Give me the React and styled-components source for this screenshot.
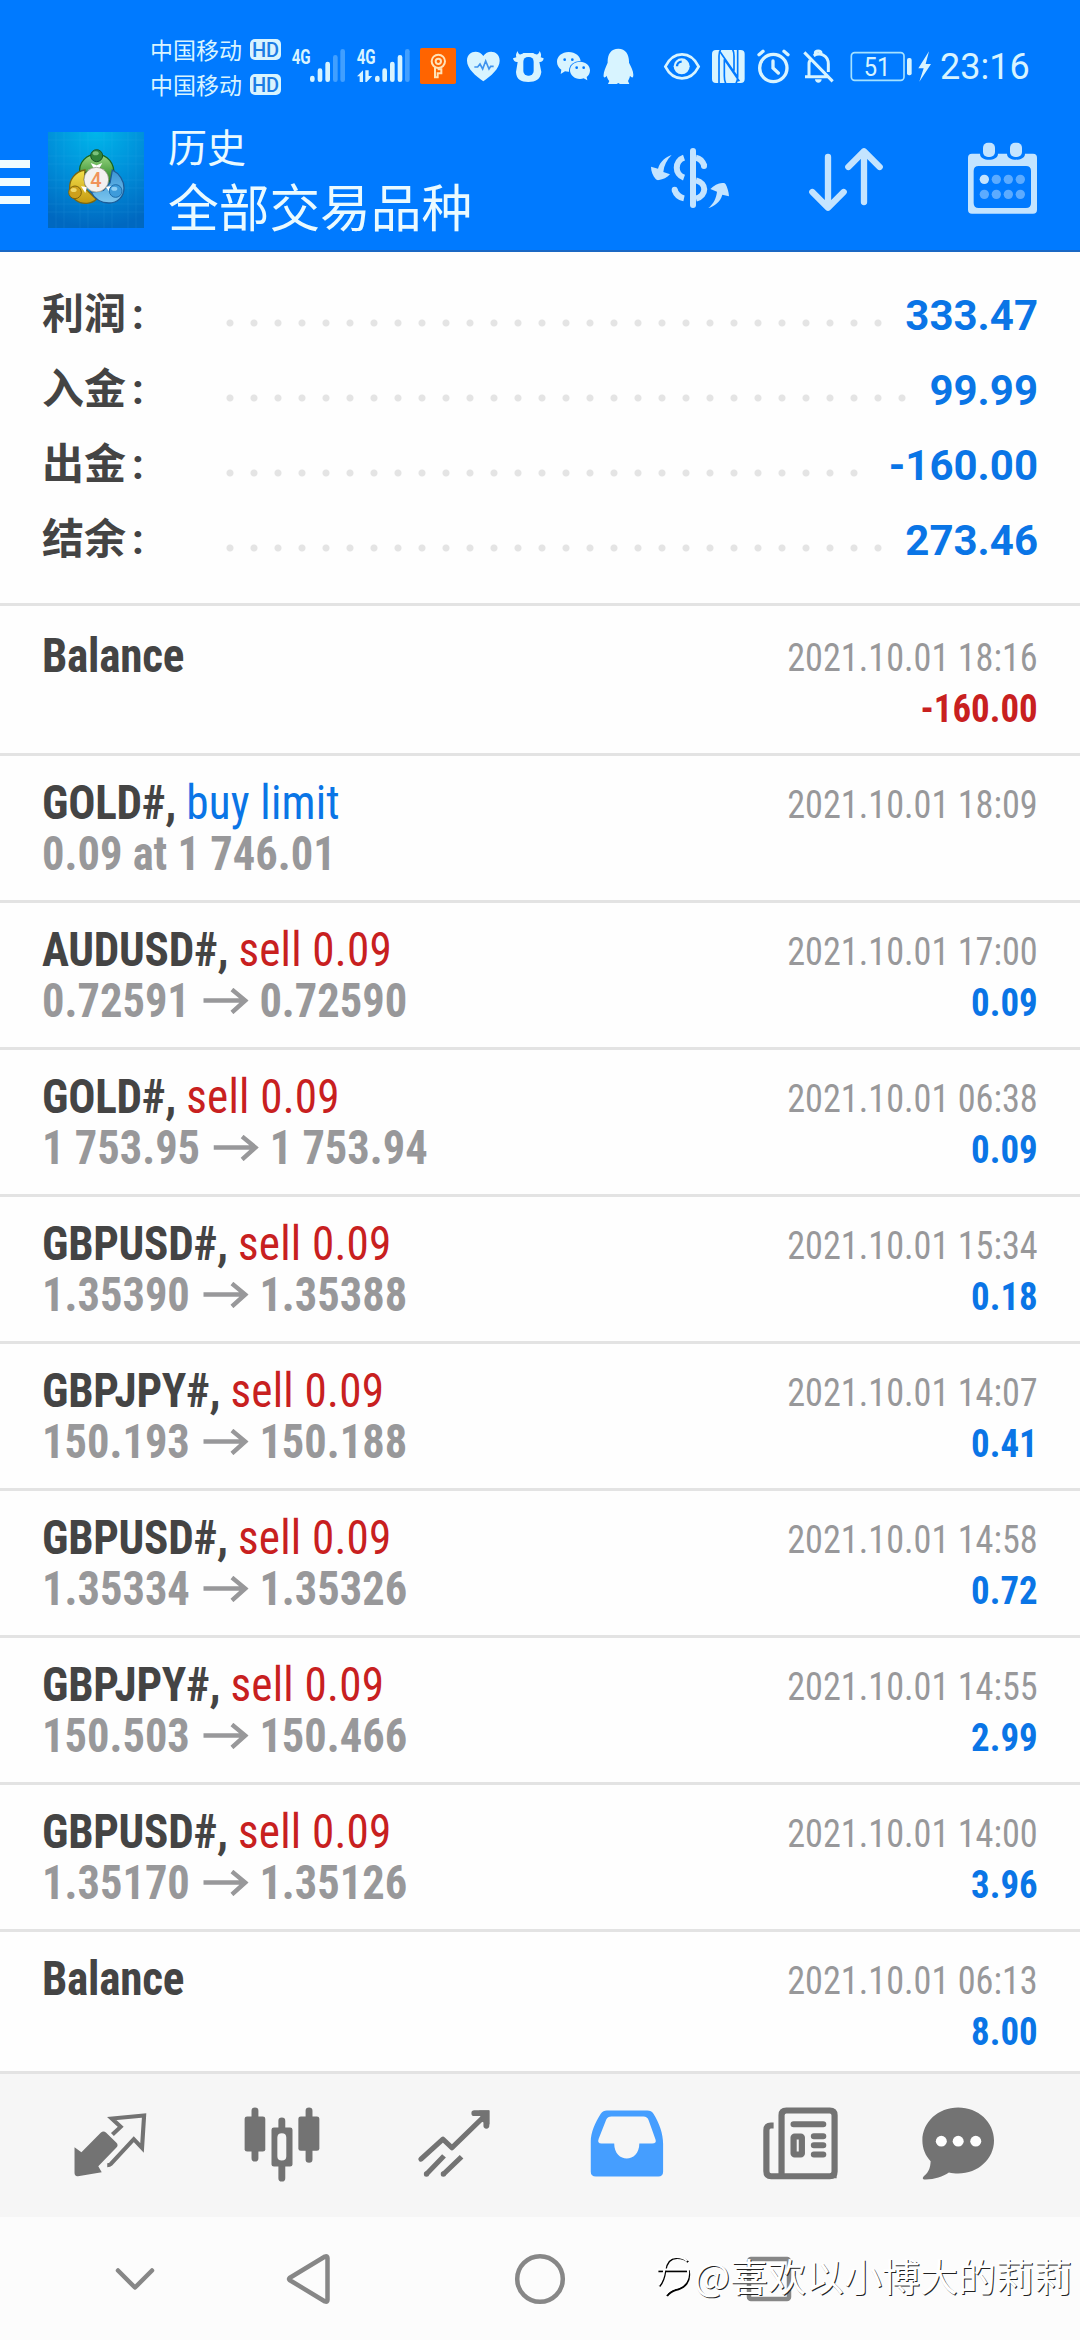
import React from "react";
import styled, { createGlobalStyle } from "styled-components";

const GlobalStyle = createGlobalStyle`
  * { box-sizing: border-box; }
  body {
    margin: 0;
    background: #ffffff;
    font-family: Roboto, "Noto Sans CJK SC", sans-serif;
  }
  svg { display: block; flex: none; }
`

const Screen = styled.div`
  position: relative;
  width: 1080px;
  height: 2340px;
  display: flex;
  flex-direction: column;
  overflow: hidden;
  background: #fefefe;
`

/* ---------- header ---------- */

const Header = styled.header`
  height: 252px;
  background: #007aff;
  border-bottom: 2px solid #1a68c4;
  color: #eafaff;
`

const StatusBar = styled.div`
  height: 112px;
  padding: 23px 0 0 150px;
  display: flex;
  align-items: center;
  color: #d8f4ff;
`

const Carriers = styled.div`
  width: 131px;
  display: flex;
  flex-direction: column;
  margin-bottom: 2px;
`

const Carrier = styled.div`
  height: 35px;
  display: flex;
  align-items: center;
  justify-content: space-between;
  font-size: 23px;
  line-height: 35px;
  font-family: "Noto Sans CJK SC", sans-serif;
  white-space: nowrap;
`

const HdBadge = styled.span`
  width: 31px;
  height: 21px;
  border-radius: 5px;
  background: #d8f4ff;
  color: #1c7ce4;
  font: 500 20px/22px Roboto, sans-serif;
  text-align: center;
`

const StatusSvg = styled.svg`
  height: 45px;
  margin-left: ${props => props.$gap}px;
`

const Clock = styled.span`
  margin-left: 8px;
  font-size: 36px;
  line-height: 45px;
`

const Toolbar = styled.div`
  height: 138px;
  display: flex;
`

const MenuButton = styled.div`
  width: 48px;
  padding-top: 48px;
  display: flex;
  flex-direction: column;
  gap: 10px;
`

const MenuLine = styled.span`
  width: 30px;
  height: 8px;
  background: #f0fcff;
`

const LogoBox = styled.div`
  padding-top: 20px;
`

const Titles = styled.div`
  flex: 1;
  padding: 5px 0 0 24px;
  font-family: "Noto Sans CJK SC", sans-serif;
  white-space: nowrap;
`

const SmallTitle = styled.div`
  font-size: 39px;
  line-height: 56px;
`

const BigTitle = styled.div`
  font-size: 50.7px;
  line-height: 65px;
`

const ToolIcon = styled.svg`
  width: 156px;
  height: 90px;
  margin-top: 18px;
`

/* ---------- summary ---------- */

const Summary = styled.section`
  height: 354px;
  padding: 26px 42px 0;
  border-bottom: 3px solid #e3e3e3;
`

const SummaryRow = styled.div`
  height: 75px;
  display: flex;
  align-items: center;
  font-size: 42px;
  font-weight: 700;
`

const SummaryLabel = styled.span`
  width: 176px;
  margin-bottom: 6px;
  color: #444444;
  line-height: 60px;
  font-family: "Noto Sans CJK SC", sans-serif;
`

const Colon = styled.span`
  margin-left: 6px;
  font-family: Roboto, sans-serif;
`

const Dots = styled.span`
  width: ${props => props.$count * 24}px;
  height: 8px;
  margin-top: 14px;
  background: radial-gradient(circle, #e4e4e4 3px, transparent 4px) 0 0 / 24px 8px;
`

const SummaryValue = styled.span`
  margin-left: auto;
  color: #0a75e6;
  line-height: 60px;
`

/* ---------- deals ---------- */

const DealList = styled.main`
  height: 1465px;
  overflow: hidden;
`

const Deal = styled.div`
  height: ${props => (props.$tall ? 150 : 147)}px;
  padding: ${props => (props.$tall ? 24 : 21)}px 42px 0;
  display: flex;
  justify-content: space-between;
  border-bottom: 3px solid #e3e3e3;
  font-family: "Roboto Condensed", Roboto, sans-serif;
  font-stretch: 75%;
  white-space: nowrap;
`

const Left = styled.div`
  font-size: 48px;
  line-height: 51px;
`

const Right = styled.div`
  padding-top: 3px;
  font-size: 39px;
  line-height: 51px;
  text-align: right;
`

const Symbol = styled.div`
  color: #444444;
  font-weight: 700;
  letter-spacing: -0.27px;
  transform: scaleX(0.94);
  transform-origin: left;
`

const Side = styled.span`
  font-weight: 400;
  letter-spacing: 0.25px;
  color: ${props => (props.$buy ? "#0a75e6" : "#c8201f")};
`

const Price = styled.div`
  display: flex;
  align-items: center;
  color: #98989a;
  font-weight: 700;
  transform: scaleX(0.927);
  transform-origin: left;
`

const DateText = styled.div`
  color: #98989a;
  transform: scaleX(0.929);
  transform-origin: right;
`

const Profit = styled.div`
  font-weight: 700;
  color: ${props => (props.$loss ? "#c8201f" : "#0a75e6")};
  transform: scaleX(0.945);
  transform-origin: right;
`

const ArrowSvg = styled.svg`
  width: 49px;
  height: 26px;
  margin: 0 12px 0 14px;
`

/* ---------- bottom bars ---------- */

const TabBar = styled.nav`
  height: 146px;
  padding: 0 22px;
  border-top: 3px solid #e3e3e3;
  background: #f6f6f6;
  display: flex;
`

const Tab = styled.div`
  width: 173px;
  flex: none;
  display: flex;
  align-items: center;
  justify-content: center;
`

const SystemBar = styled.div`
  flex: 1;
  padding-left: 105px;
  background: #fcfcfc;
  display: flex;
  align-items: center;
`

const SysIcon = styled.svg`
  width: 60px;
  height: 60px;
  margin-left: ${props => props.$gap || 0}px;
  fill: none;
  stroke: #878787;
  stroke-width: 4.5;
  stroke-linecap: round;
  stroke-linejoin: round;
`

const Watermark = styled.div`
  position: absolute;
  right: 8px;
  bottom: 37px;
  display: flex;
  align-items: center;
  color: #ffffff;
  font: 400 38px/56px "Noto Sans CJK SC", sans-serif;
  text-shadow: 1px 1px 0 #222222;
  white-space: nowrap;
`

const summary = [
  { label: "利润", value: "333.47", dots: 28 },
  { label: "入金", value: "99.99", dots: 29 },
  { label: "出金", value: "-160.00", dots: 27 },
  { label: "结余", value: "273.46", dots: 28 },
]

const deals = [
  { symbol: "Balance", date: "2021.10.01 18:16", profit: "-160.00" },
  { symbol: "GOLD#,", side: "buy limit", text: "0.09 at 1 746.01", date: "2021.10.01 18:09" },
  { symbol: "AUDUSD#,", side: "sell 0.09", open: "0.72591", close: "0.72590", date: "2021.10.01 17:00", profit: "0.09" },
  { symbol: "GOLD#,", side: "sell 0.09", open: "1 753.95", close: "1 753.94", date: "2021.10.01 06:38", profit: "0.09" },
  { symbol: "GBPUSD#,", side: "sell 0.09", open: "1.35390", close: "1.35388", date: "2021.10.01 15:34", profit: "0.18" },
  { symbol: "GBPJPY#,", side: "sell 0.09", open: "150.193", close: "150.188", date: "2021.10.01 14:07", profit: "0.41" },
  { symbol: "GBPUSD#,", side: "sell 0.09", open: "1.35334", close: "1.35326", date: "2021.10.01 14:58", profit: "0.72" },
  { symbol: "GBPJPY#,", side: "sell 0.09", open: "150.503", close: "150.466", date: "2021.10.01 14:55", profit: "2.99" },
  { symbol: "GBPUSD#,", side: "sell 0.09", open: "1.35170", close: "1.35126", date: "2021.10.01 14:00", profit: "3.96" },
  { symbol: "Balance", date: "2021.10.01 06:13", profit: "8.00" },
]

const ICE = "#d8f4ff"
const BLUE = "#007aff"

// x and w are in thirds of a pixel
const StatusIcon = ({ x, w, gap, children }) => (
  <StatusSvg $gap={gap} width={w / 3} viewBox={`${x} 75 ${w} 135`} fill={ICE}>
    {children}
  </StatusSvg>
)

const StatusIcons = () => (
  <>
    <StatusIcon gap={9} x={480} w={174}>
      <text x="485" y="131" fontSize="58" fontWeight="700" textLength="57" lengthAdjust="spacingAndGlyphs">4G</text>
      <g stroke={ICE} strokeWidth="14" strokeLinecap="round">
        <path d="M547 174v5M570 152v27M593 132v47" />
        <path d="M616 112v67M638 94v85" opacity=".3" />
      </g>
    </StatusIcon>
    <StatusIcon gap={7} x={675} w={171}>
      <text x="680" y="131" fontSize="58" fontWeight="700" textLength="57" lengthAdjust="spacingAndGlyphs">4G</text>
      <path d="M681 169l18-18v35h-10v-17zM706 151h10v17h11l-17 18h-4z" />
      <g stroke={ICE} strokeWidth="14" strokeLinecap="round">
        <path d="M742 174v5M764 152v27M787 132v47M810 112v67" />
        <path d="M832 94v85" opacity=".3" />
      </g>
    </StatusIcon>
    <StatusIcon gap={7} x={867} w={114}>
      <rect x="870" y="84" width="108" height="108" rx="5" fill="#ff6400" />
      <g fill="none" stroke="#ffe3b8" strokeWidth="6">
        <circle cx="925" cy="124" r="20" />
        <circle cx="925" cy="124" r="8" />
        <path d="M915 142v30h8v-12h11v-12h-11" />
      </g>
    </StatusIcon>
    <StatusIcon gap={10} x={-9} w={99}>
      <path d="M40 184C18 168-9 146-9 122C-9 92 27 87 40 108C53 87 89 92 89 122C89 146 62 168 40 184z" />
      <path d="M13 141h10l7-9 8 15 9-24 10 24 5-8h9" fill="none" stroke="#3f93ee" strokeWidth="5" />
    </StatusIcon>
    <StatusIcon gap={13} x={129} w={93}>
      <path d="M143 93c2 12 8 13 17 6h30c9 7 16 6 19-6c5 8 5 14 3 19l9 3c-1 9-7 12-13 11l6 30c-3 22-17 30-39 30s-36-8-37-30l5-30c-7 1-13-3-14-11l10-3c-2-6-1-12 4-19z" />
      <rect x="160" y="111" width="31" height="56" rx="14" fill={BLUE} />
    </StatusIcon>
    <StatusIcon gap={12} x={258} w={105}>
      <path d="M296 96c20 0 36 13 36 29s-16 30-36 30c-4 0-8 0-11-1l-13 8 2-13c-8-6-13-14-13-24 0-16 15-29 35-29z" />
      <ellipse cx="330" cy="152" rx="33" ry="29" fill={BLUE} />
      <path d="M330 125c17 0 30 12 30 26 0 9-4 16-10 20l2 10-11-6c-3 1-7 2-11 2-17 0-30-12-30-26s13-26 30-26z" />
      <g fill={BLUE}>
        <circle cx="284" cy="119" r="4" />
        <circle cx="307" cy="119" r="4" />
        <circle cx="320" cy="143" r="4" />
        <circle cx="341" cy="143" r="4" />
      </g>
    </StatusIcon>
    <StatusIcon gap={12} x={399} w={93}>
      <path d="M445 86c23 0 33 19 32 42 7 14 16 30 12 43-2 3-6 0-9-4-1 7-4 12-6 16l4 9h-28l-5-3-5 3h-26l4-9c-4-4-6-9-8-16-3 5-8 7-9 3-2-12 6-28 12-42-1-24 9-42 32-42z" />
    </StatusIcon>
    <StatusIcon gap={29} x={579} w={114}>
      <path d="M586 140c24-49 76-49 100 0c-24 47-76 47-100 0z" fill="none" stroke={ICE} strokeWidth="8" />
      <circle cx="635" cy="139" r="24" />
      <path d="M621 139c0-8 6-14 14-14" fill="none" stroke={BLUE} strokeWidth="7" />
    </StatusIcon>
    <StatusIcon gap={10} x={723} w={105}>
      <rect x="726" y="90" width="98" height="99" rx="12" />
      <path d="M752 88q-5 8-5 20v82M798 190q5-8 5-20v-82M748 92l55 80M763 118v50q0 14 4 22M763 118l45 66M788 88q4 8 4 20v44" fill="none" stroke={BLUE} strokeWidth="5" />
    </StatusIcon>
    <StatusIcon gap={10} x={858} w={105}>
      <g fill="none" stroke={ICE} strokeWidth="10" strokeLinecap="round">
        <circle cx="910" cy="144" r="41" />
        <path d="M867 104l12-10M954 104l-12-10M909 123v21l16 15" />
      </g>
    </StatusIcon>
    <StatusIcon gap={12} x={189} w={93}>
      <g fill="none" stroke={ICE} strokeWidth="9">
        <path d="M193 97l85 87M195 170h70M207 168v-36c0-4 1-8 3-11M221 107c20-12 44 0 44 25v24M226 105v-6c0-8 17-8 17 0v6" />
      </g>
      <path d="M225 178h20c0 14-20 14-20 0z" />
    </StatusIcon>
    <StatusIcon gap={16} x={330} w={186}>
      <rect x="334" y="98" width="158" height="83" rx="10" fill="none" stroke="#a5e2ff" strokeWidth="5" />
      <rect x="501" y="114" width="14" height="52" rx="6" />
      <text x="371" y="167" fontSize="78" textLength="80" lengthAdjust="spacingAndGlyphs">51</text>
    </StatusIcon>
    <StatusIcon gap={6} x={534} w={42}>
      <path d="M567 94l-32 51h16l-13 40 35-53h-16z" />
    </StatusIcon>
  </>
)

const Logo = () => (
  <svg width="96" height="96" viewBox="144 66 288 288">
    <defs>
      <radialGradient id="sky" cx=".5" cy="0" r="1">
        <stop offset="0" stopColor="#00b6ea" />
        <stop offset=".5" stopColor="#0090da" />
        <stop offset="1" stopColor="#0068c0" />
      </radialGradient>
      <linearGradient id="green" x1="0" y1="0" x2="0" y2="1">
        <stop offset="0" stopColor="#9ad884" />
        <stop offset="1" stopColor="#25801f" />
      </linearGradient>
      <linearGradient id="gold" x1="0" y1="0" x2="0" y2="1">
        <stop offset="0" stopColor="#f3e04c" />
        <stop offset="1" stopColor="#c59a10" />
      </linearGradient>
      <linearGradient id="water" x1="0" y1="0" x2="0" y2="1">
        <stop offset="0" stopColor="#3a94d4" />
        <stop offset="1" stopColor="#7cc6ef" />
      </linearGradient>
    </defs>
    <rect x="144" y="66" width="288" height="288" fill="url(#sky)" />
    <path d="M168 66v288M192 66v288M240 66v288M264 66v288M312 66v288M336 66v288M384 66v288M408 66v288M144 90h288M144 138h288M144 162h288M144 210h288M144 234h288M144 282h288M144 306h288" stroke="#5cc8ff" strokeWidth="2" opacity=".14" />
    <path d="M239 190c-4-34 21-57 50-57 34 0 56 28 52 62l-14 22-14-34-23-15-24 18z" fill="url(#green)" stroke="#17661d" strokeWidth="4" />
    <path d="M255 180c-30 4-48 30-46 55 2 31 28 47 52 45 12-1 22-6 28-12l-30-29-6-30z" fill="url(#gold)" stroke="#7c6710" strokeWidth="4" />
    <path d="M337 180c21 10 35 32 35 54 0 27-20 45-45 45-24 0-44-14-54-33l37-5 20-22z" fill="url(#water)" stroke="#1c5c98" strokeWidth="4" />
    <path d="M272 159l18 7 17-7-9 16h-17zM243 229l13 20 5-18zM317 230l21-2-9 19z" fill="#ffffff" />
    <circle cx="290" cy="137" r="18" fill="#31833a" stroke="#1a5424" strokeWidth="3" />
    <circle cx="225" cy="247" r="19" fill="#cda01c" stroke="#80640a" strokeWidth="3" />
    <circle cx="347" cy="243" r="19" fill="#3e9cdb" stroke="#1c6cac" strokeWidth="3" />
    <ellipse cx="287" cy="130" rx="9" ry="6" fill="#9bdc98" opacity=".7" />
    <ellipse cx="221" cy="240" rx="9" ry="6" fill="#fff08c" opacity=".7" />
    <ellipse cx="343" cy="236" rx="9" ry="6" fill="#b4e6ff" opacity=".7" />
    <circle cx="289" cy="209" r="37" fill="#f3f1f0" stroke="#8c8c7c" strokeWidth="2" />
    <text x="288" y="230" fontSize="60" fontWeight="500" fill="#f0935a" textAnchor="middle">4</text>
  </svg>
)

const ToolbarIcons = () => (
  <>
    <ToolIcon viewBox="36 30 468 270" fill="#c4e4ff">
      <g fill="none" stroke="#c4e4ff" strokeWidth="18">
        <path d="M279 93v162" strokeLinecap="round" />
        <path d="M252 113c-29 10-29 50 0 60M252 235c-14-3-24-12-28-25" />
        <path d="M288 113c12 2 20 10 25 25M288 181c33 8 33 45 0 55" />
        <path d="M224 209v1M312 137v1" strokeLinecap="round" />
      </g>
      <path d="M215 105c-15 4-35 19-41 41l-21-6c0 14 6 28 14 37 2 3 6 4 10 3 12-1 24-7 33-17l-20-7c2-19 10-36 25-51z" />
      <path d="M325 264c15-4 36-17 42-40l20 5c-1-14-5-26-10-36-2-4-6-5-10-4-13 1-26 8-36 18l20 8c-2 19-10 36-26 49z" />
    </ToolIcon>
    <ToolIcon viewBox="504 30 468 270" fill="none" stroke="#c4e4ff" strokeWidth="19" strokeLinecap="round" strokeLinejoin="round">
      <path d="M684 111v151M637 216l47 47 47-47" />
      <path d="M792 246V94M745 141l47-47 47 47" />
    </ToolIcon>
    <ToolIcon viewBox="972 30 468 270" fill="#c4e4ff">
      <path fillRule="evenodd" d="M1116 101h24c0 24 54 24 54 0h27c0 24 54 24 54 0h24q12 0 12 12v156q0 12-12 12h-183q-12 0-12-12v-156q0-12 12-12zM1136 138q-15 0-15 15v96q0 15 15 15h142q15 0 15-15v-96q0-15-15-15z" />
      <rect x="1149" y="68" width="36" height="43" rx="15" />
      <rect x="1230" y="68" width="36" height="43" rx="15" />
      <circle cx="1153" cy="178" r="14" />
      <g fill="#5cabff">
        <circle cx="1189" cy="178" r="14" />
        <circle cx="1225" cy="178" r="14" />
        <circle cx="1261" cy="178" r="14" />
        <circle cx="1153" cy="223" r="14" />
        <circle cx="1189" cy="223" r="14" />
        <circle cx="1225" cy="223" r="14" />
        <circle cx="1261" cy="223" r="14" />
      </g>
    </ToolIcon>
  </>
)

const TabIcon = ({ x, children, ...rest }) => (
  <Tab>
    <svg width="110" height="110" viewBox={`${x} 91.5 319.4 330`} preserveAspectRatio="none" fill="#737373" {...rest}>
      {children}
    </svg>
  </Tab>
)

const Tabs = () => (
  <TabBar>
    <TabIcon x={155.4}>
      <path d="M215 260l20 15 56-58q8-8 16 0l29 29q8 8 0 16l-52 55 10 18-69 12q-10 1-10-10z" />
      <path d="M325 222l24-23-26-25 94-9-6 97-24-26-67 75q-3 3-10 3" fill="none" stroke="#737373" strokeWidth="12" />
    </TabIcon>
    <TabIcon x={657.8}>
      <g stroke="#737373" strokeWidth="20" strokeLinecap="round">
        <path d="M739 151v142M896 151v146M817 181v25M817 316v37" />
      </g>
      <rect x="709" y="168" width="60" height="105" rx="7" />
      <rect x="865" y="168" width="61" height="103" rx="7" />
      <path fillRule="evenodd" d="M794 201h47q7 0 7 7v104q0 6-7 6h-47q-7 0-7-6V208q0-7 7-7zM817 218q-13 0-13 13v56q0 13 13 13t13-13v-56q0-13-13-13z" />
    </TabIcon>
    <TabIcon x={1160.2}>
      <g fill="none" stroke="#737373" strokeWidth="15">
        <path d="M1221 296l64-60 26 26 100-101" strokeLinecap="round" strokeLinejoin="round" />
        <path d="M1237 341l51-55M1286 341l53-52" />
        <path d="M1237 340v1M1286 340v1" strokeLinecap="round" />
        <path d="M1376 158h35v38" strokeWidth="17" strokeLinecap="round" />
      </g>
      <path d="M1390 150h30v42l-22-8z" />
    </TabIcon>
    <TabIcon x={94.4} fill="#459eff">
      <path fillRule="evenodd" d="M193 150h117q12 0 18 10c17 28 28 60 28 90v84q0 14-14 14H161q-15 0-15-14v-90c0-28 12-56 29-84q7-10 18-10zM206 168q-11 0-15 9l-22 58q-5 14 8 14h37c0 60 73 60 73 0h37q14 0 10-12l-20-58q-4-11-15-11z" />
    </TabIcon>
    <TabIcon x={596.8} fill="none" stroke="#737373" strokeWidth="18">
      <path d="M677 195h-8q-13 0-13 14v123q0 15 14 15h170q14 0 14-14V164q0-14-14-14H714q-14 0-14 14v183" />
      <path d="M735 191h86M794 227h27M794 254h27M794 282h27" strokeLinecap="round" />
      <rect x="735" y="228" width="24" height="54" rx="3" />
      <path d="M700 325v22h22M854 325v22h-22" strokeWidth="12" />
    </TabIcon>
    <TabIcon x={1099.2}>
      <path d="M1213 141c58 0 104 44 104 99s-46 99-104 99c-10 0-18-1-27-3-17 12-42 21-67 21q-14 0-6-10c17-14 19-29 20-45-15-16-24-38-24-62 0-55 46-99 104-99z" />
      <g fill="#ffffff">
        <circle cx="1164" cy="242" r="16" />
        <circle cx="1213" cy="242" r="16" />
        <circle cx="1264" cy="242" r="16" />
      </g>
    </TabIcon>
  </TabBar>
)

const Arrow = () => (
  <ArrowSvg viewBox="0 0 46 26" preserveAspectRatio="none" fill="none" stroke="#98989a" strokeWidth="4.4">
    <path d="M0 12.500h43M29 1.500l13.500 11L29 24.500" />
  </ArrowSvg>
)

const DealRow = ({ deal, tall }) => (
  <Deal $tall={tall}>
    <Left>
      <Symbol>
        {deal.symbol} {deal.side && <Side $buy={deal.side.startsWith("buy")}>{deal.side}</Side>}
      </Symbol>
      {deal.text && <Price>{deal.text}</Price>}
      {deal.open && <Price>{deal.open}<Arrow />{deal.close}</Price>}
    </Left>
    <Right>
      <DateText>{deal.date}</DateText>
      {deal.profit && <Profit $loss={deal.profit.startsWith("-")}>{deal.profit}</Profit>}
    </Right>
  </Deal>
)

const App = () => {
  return (
    <Screen>
      <GlobalStyle />
      <Header>
        <StatusBar>
          <Carriers>
            <Carrier>中国移动<HdBadge>HD</HdBadge></Carrier>
            <Carrier>中国移动<HdBadge>HD</HdBadge></Carrier>
          </Carriers>
          <StatusIcons />
          <Clock>23:16</Clock>
        </StatusBar>
        <Toolbar>
          <MenuButton>
            <MenuLine />
            <MenuLine />
            <MenuLine />
          </MenuButton>
          <LogoBox><Logo /></LogoBox>
          <Titles>
            <SmallTitle>历史</SmallTitle>
            <BigTitle>全部交易品种</BigTitle>
          </Titles>
          <ToolbarIcons />
        </Toolbar>
      </Header>
      <Summary>
        {summary.map(row => (
          <SummaryRow key={row.label}>
            <SummaryLabel>{row.label}<Colon>:</Colon></SummaryLabel>
            <Dots $count={row.dots} />
            <SummaryValue>{row.value}</SummaryValue>
          </SummaryRow>
        ))}
      </Summary>
      <DealList>
        {deals.map((deal, i) => (
          <DealRow key={deal.date} deal={deal} tall={i === 0} />
        ))}
      </DealList>
      <Tabs />
      <SystemBar>
        <SysIcon viewBox="0 0 60 60"><path d="M13 21.500l17 17 17-17" /></SysIcon>
        <SysIcon $gap={113} viewBox="0 0 60 60"><path d="M11.500 29L47 7.500q2.500-1 2.500 1.500v42q0 2.500-2.500 1.500L11.500 31q-1-1 0-2z" /></SysIcon>
        <SysIcon $gap={172} viewBox="0 0 60 60"><circle cx="30" cy="30" r="22.800" /></SysIcon>
        <SysIcon $gap={169} viewBox="0 0 60 60"><rect x="10" y="10" width="40" height="40" rx="2" /></SysIcon>
      </SystemBar>
      <Watermark>
        <svg width="38" height="45" viewBox="340 600 110 134" preserveAspectRatio="none" fill="none">
          <path d="M350 699c12-14 15-30 17-46c4-26 16-38 34-38 14 0 25 4 32 12M347 654h88c5 30-10 50-38 56-10 3-19 9-25 18" stroke="#000000" strokeWidth="6" />
          <path d="M347 696c12-14 15-30 17-46c4-26 16-38 34-38 14 0 25 4 32 12M344 649h88c5 30-10 50-38 56-10 3-19 9-25 18" stroke="#ffffff" strokeWidth="6" />
        </svg>
        @喜欢以小博大的莉莉
      </Watermark>
    </Screen>
  )
}

export default App
